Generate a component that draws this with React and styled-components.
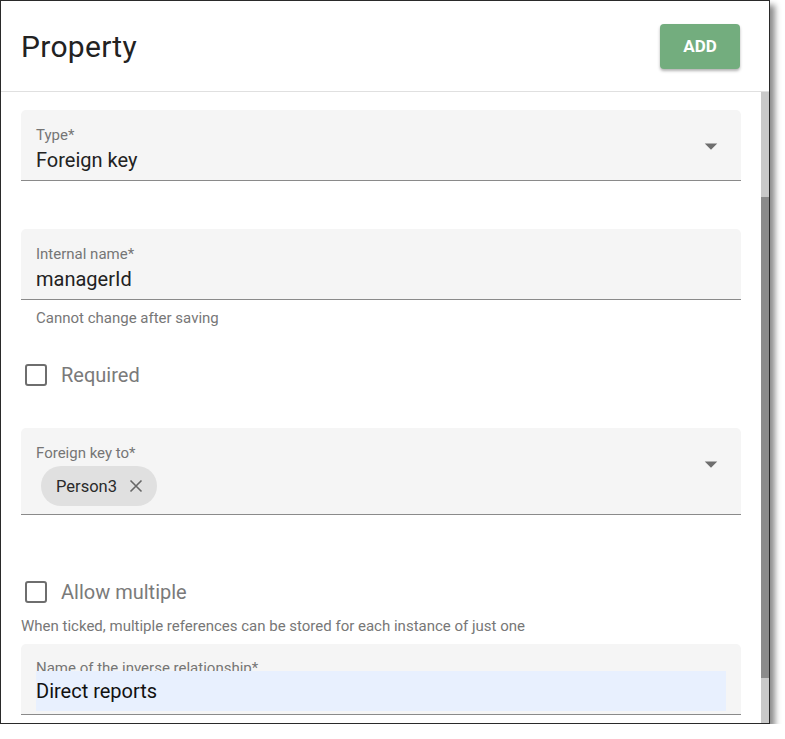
import React from 'react';
import styled, { createGlobalStyle } from 'styled-components';

const GlobalStyle = createGlobalStyle`
  body {
    margin: 0;
    background: #fff;
    font-family: Roboto, "Liberation Sans", sans-serif;
  }
`;

const Dialog = styled.div`
  box-sizing: border-box;
  width: 770px;
  height: 724px;
  border: 1px solid #2a2a2a;
  background: #fff;
  display: flex;
  flex-direction: column;
  overflow: hidden;
  box-shadow: 5px 5px 6px rgba(0, 0, 0, 0.45);
`;

const Header = styled.div`
  height: 90px;
  flex-shrink: 0;
  display: flex;
  align-items: center;
  justify-content: space-between;
  padding: 0 29px 0 20px;
  border-bottom: 1px solid #e0e0e0;
`;

const Title = styled.h2`
  margin: 0;
  font-size: 30px;
  font-weight: 400;
  color: #222;
  letter-spacing: 0.3px;
`;

const AddButton = styled.button`
  width: 80px;
  height: 45px;
  border: none;
  border-radius: 4px;
  background: #73ad7e;
  color: #fff;
  font-family: Roboto, "Liberation Sans", sans-serif;
  font-size: 17px;
  font-weight: 700;
  box-shadow: 0 2px 3px rgba(0, 0, 0, 0.3);
  cursor: pointer;
`;

const Body = styled.div`
  flex: 1;
  display: flex;
  min-height: 0;
`;

const Content = styled.div`
  flex: 1;
  padding: 18px 20px 0 20px;
  display: flex;
  flex-direction: column;
  overflow: hidden;
`;

const Scrollbar = styled.div`
  width: 8px;
  background: #c9c9c9;
  padding-top: 105px;
`;

const Thumb = styled.div`
  height: 481px;
  background: #8b8b8b;
`;

const Field = styled.div`
  flex-shrink: 0;
  display: flex;
  margin-top: ${(p) => p.$top || 0}px;
  background: #f5f5f5;
  border-radius: 5px 5px 0 0;
  border-bottom: 1px solid #8a8a8a;
  padding: ${(p) => p.$pad || '16px 15px 8px 15px'};
`;

const FieldMain = styled.div`
  flex: 1;
  display: flex;
  flex-direction: column;
  align-items: flex-start;
`;

const Label = styled.div`
  font-size: 15px;
  line-height: 18px;
  color: #757575;
  margin-bottom: 4px;
`;

const Value = styled.div`
  font-size: 20px;
  line-height: 24px;
  color: #222;
`;

const AutofillValue = styled.div`
  align-self: stretch;
  margin: -10px 0 0 0;
  height: 40px;
  line-height: 40px;
  font-size: 20px;
  color: #111;
  background: #e8f0fe;
`;

const Arrow = styled.svg`
  width: 30px;
  height: 30px;
  margin-top: 5px;
  flex-shrink: 0;
`;

const Helper = styled.div`
  font-size: 15px;
  line-height: 18px;
  color: #777;
  margin-top: ${(p) => p.$top || 0}px;
  padding-left: ${(p) => (p.$indent ? 15 : 0)}px;
  white-space: nowrap;
`;

const CheckRow = styled.label`
  display: flex;
  align-items: center;
  margin-top: ${(p) => p.$top || 0}px;
  padding-left: 4px;
  height: 22px;
`;

const Box = styled.span`
  box-sizing: border-box;
  width: 22px;
  height: 22px;
  border: 2px solid #6e6e6e;
  border-radius: 3px;
`;

const CheckLabel = styled.span`
  margin-left: 14px;
  font-size: 20px;
  color: #7a7a7a;
`;

const Chip = styled.div`
  display: inline-flex;
  align-items: center;
  height: 40px;
  margin-left: 5px;
  padding: 0 14px 0 15px;
  border-radius: 20px;
  background: #e0e0e0;
  font-size: 16.5px;
  color: #2a2a2a;
  gap: 12px;
`;

const DropIcon = () => (
  <Arrow viewBox="0 0 24 24">
    <path d="M7 10l5 5 5-5z" fill="#6e6e6e" />
  </Arrow>
);

const CloseIcon = () => (
  <svg width="14" height="14" viewBox="0 0 14 14">
    <path d="M1.5 1.5l11 11M12.5 1.5l-11 11" stroke="#666" strokeWidth="1.6" fill="none" />
  </svg>
);

export default function App() {
  return (
    <>
      <GlobalStyle />
      <Dialog>
        <Header>
          <Title>Property</Title>
          <AddButton>ADD</AddButton>
        </Header>
        <Body>
          <Content>
            <Field>
              <FieldMain>
                <Label>Type*</Label>
                <Value>Foreign key</Value>
              </FieldMain>
              <DropIcon />
            </Field>

            <Field $top={48}>
              <FieldMain>
                <Label>Internal name*</Label>
                <Value>managerId</Value>
              </FieldMain>
            </Field>
            <Helper $top={9} $indent>Cannot change after saving</Helper>

            <CheckRow $top={37}>
              <Box />
              <CheckLabel>Required</CheckLabel>
            </CheckRow>

            <Field $top={42}>
              <FieldMain>
                <Label>Foreign key to*</Label>
                <Chip>
                  Person3
                  <CloseIcon />
                </Chip>
              </FieldMain>
              <DropIcon />
            </Field>

            <CheckRow $top={66}>
              <Box />
              <CheckLabel>Allow multiple</CheckLabel>
            </CheckRow>
            <Helper $top={14}>When ticked, multiple references can be stored for each instance of just one</Helper>

            <Field $top={9} $pad="15px 15px 3px 15px">
              <FieldMain>
                <Label>Name of the inverse relationship*</Label>
                <AutofillValue>Direct reports</AutofillValue>
              </FieldMain>
            </Field>
          </Content>
          <Scrollbar>
            <Thumb />
          </Scrollbar>
        </Body>
      </Dialog>
    </>
  );
}
